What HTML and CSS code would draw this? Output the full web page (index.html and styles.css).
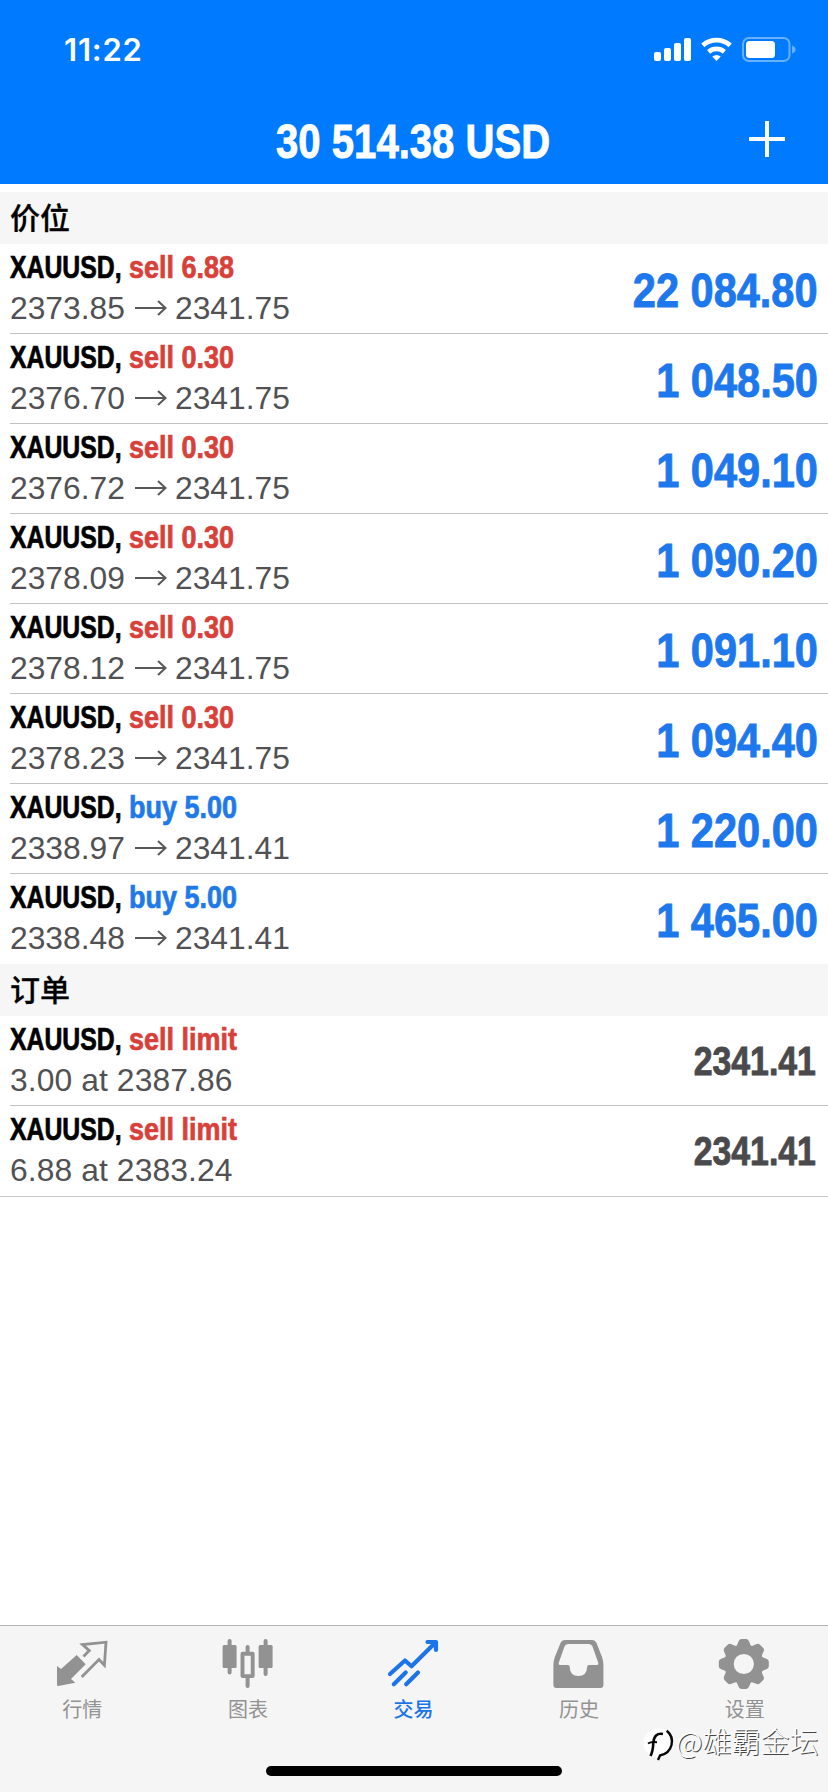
FILE: index.html
```html
<!DOCTYPE html>
<html lang="zh-CN">
<head>
<meta charset="utf-8">
<title>交易</title>
<link rel="stylesheet" href="styles.css">
</head>
<body>
<div class="app">
  <header class="header">
    <div class="status">
      <span class="time">11:22</span>
      <svg class="status-icons" width="144" height="28" viewBox="0 0 144 28" fill="#fff">
        <rect x="1" y="16" width="7" height="9" rx="2"/><rect x="11" y="12" width="7" height="13" rx="2"/><rect x="21" y="7" width="7" height="18" rx="2"/><rect x="31" y="2" width="7" height="23" rx="2"/>
        <g fill="none" stroke="#fff" stroke-width="4.8"><path d="M49.800 9.400a20.500 20.500 0 0 1 27.400 0"/><path d="M55.600 15.800a12.400 12.400 0 0 1 15.800 0"/></g>
        <path d="M63.500 25l-4.300-4.400q4.300-3.200 8.600 0z"/>
        <rect x="90" y="2" width="46.500" height="23" rx="6" fill="none" stroke="#66b0ff" stroke-width="2"/>
        <rect x="93" y="5" width="29" height="17" rx="3.500"/><path d="M139 9.500q3.500 1 3.500 4t-3.500 4z" fill="#66b0ff"/>
      </svg>
    </div>
    <div class="nav">
      <h1 class="balance">30 514.38 USD</h1>
      <svg class="plus" width="36" height="36" viewBox="0 0 36 36"><path d="M18 0V36M0 18H36" stroke="#fff" stroke-width="4"/></svg>
    </div>
  </header>
  <main class="content">
    <h2 class="section">价位</h2>
    <ul class="list">
      <li class="row"><div><div class="name"><b class="symbol">XAUUSD,</b><b class="side sell">sell 6.88</b></div><div class="price">2373.85<svg class="arrow" viewBox="0 0 32 16"><path d="M0 8H30M23 1L30.500 8L23 15"/></svg>2341.75</div></div><strong class="profit">22 084.80</strong></li>
      <li class="row"><div><div class="name"><b class="symbol">XAUUSD,</b><b class="side sell">sell 0.30</b></div><div class="price">2376.70<svg class="arrow" viewBox="0 0 32 16"><path d="M0 8H30M23 1L30.500 8L23 15"/></svg>2341.75</div></div><strong class="profit">1 048.50</strong></li>
      <li class="row"><div><div class="name"><b class="symbol">XAUUSD,</b><b class="side sell">sell 0.30</b></div><div class="price">2376.72<svg class="arrow" viewBox="0 0 32 16"><path d="M0 8H30M23 1L30.500 8L23 15"/></svg>2341.75</div></div><strong class="profit">1 049.10</strong></li>
      <li class="row"><div><div class="name"><b class="symbol">XAUUSD,</b><b class="side sell">sell 0.30</b></div><div class="price">2378.09<svg class="arrow" viewBox="0 0 32 16"><path d="M0 8H30M23 1L30.500 8L23 15"/></svg>2341.75</div></div><strong class="profit">1 090.20</strong></li>
      <li class="row"><div><div class="name"><b class="symbol">XAUUSD,</b><b class="side sell">sell 0.30</b></div><div class="price">2378.12<svg class="arrow" viewBox="0 0 32 16"><path d="M0 8H30M23 1L30.500 8L23 15"/></svg>2341.75</div></div><strong class="profit">1 091.10</strong></li>
      <li class="row"><div><div class="name"><b class="symbol">XAUUSD,</b><b class="side sell">sell 0.30</b></div><div class="price">2378.23<svg class="arrow" viewBox="0 0 32 16"><path d="M0 8H30M23 1L30.500 8L23 15"/></svg>2341.75</div></div><strong class="profit">1 094.40</strong></li>
      <li class="row"><div><div class="name"><b class="symbol">XAUUSD,</b><b class="side buy">buy 5.00</b></div><div class="price">2338.97<svg class="arrow" viewBox="0 0 32 16"><path d="M0 8H30M23 1L30.500 8L23 15"/></svg>2341.41</div></div><strong class="profit">1 220.00</strong></li>
      <li class="row"><div><div class="name"><b class="symbol">XAUUSD,</b><b class="side buy">buy 5.00</b></div><div class="price">2338.48<svg class="arrow" viewBox="0 0 32 16"><path d="M0 8H30M23 1L30.500 8L23 15"/></svg>2341.41</div></div><strong class="profit">1 465.00</strong></li>
    </ul>
    <h2 class="section">订单</h2>
    <ul class="list orders">
      <li class="row"><div><div class="name"><b class="symbol">XAUUSD,</b><b class="side sell">sell limit</b></div><div class="price">3.00 at 2387.86</div></div><strong class="quote">2341.41</strong></li>
      <li class="row"><div><div class="name"><b class="symbol">XAUUSD,</b><b class="side sell">sell limit</b></div><div class="price">6.88 at 2383.24</div></div><strong class="quote">2341.41</strong></li>
    </ul>
  </main>
  <footer class="footer">
    <nav class="tabs">
      <a class="tab"><svg viewBox="0 0 52 52"><path d="M0 28L4 31L19.700 17L28.700 26.300L14 41L18.300 44.700L1.300 48Q0 48 0 47Z" fill="currentColor"/><path d="M26.500 18.500L32.300 12.600L25.500 6.600L49 4.200L47.400 27.300L42 21.600L24.700 39" fill="none" stroke="currentColor" stroke-width="2.800"/></svg><span>行情</span></a>
      <a class="tab"><svg viewBox="0 0 52 52" fill="currentColor"><rect x=".600" y="7" width="14" height="23" rx="1.500"/><rect x="36.600" y="7" width="14" height="23" rx="1.500"/><path d="M7.600 3V34.500M43.600 3V36M25.600 9V15M25.600 39V48" stroke="currentColor" stroke-width="4" stroke-linecap="round"/><rect x="20.500" y="15.700" width="10.200" height="22.400" fill="none" stroke="currentColor" stroke-width="3.900" stroke-linejoin="round"/></svg><span>图表</span></a>
      <a class="tab active"><svg viewBox="0 0 52 52" fill="none" stroke="currentColor" stroke-width="4.200" stroke-linecap="round" stroke-linejoin="round"><path d="M2 36L17 22.500L23.500 28.300L47 5M39.500 4H48V12M5.800 46.200L17.700 34.500M18.200 46.200L30 34.500"/><path d="M42 4L48 10V4Z" fill="currentColor" stroke-width="2"/></svg><span>交易</span></a>
      <a class="tab"><svg viewBox="0 0 52 52"><path fill="currentColor" fill-rule="evenodd" d="M11 2H38Q41 2 42.500 5L48 19Q49.400 23 49.400 27V47Q49.400 50 46.400 50H2.400Q-.600 50-.600 47V27Q-.600 23 .800 19L6.500 5Q8 2 11 2ZM14 6Q11.500 6 10.500 8.500L5 24Q4 27 6 27H14Q15.700 27 15.700 29Q16 38 24.400 38Q32.800 38 33.100 29Q33.100 27 35 27H43Q45 27 44 24L38.500 8.500Q37.500 6 35 6Z"/></svg><span>历史</span></a>
      <a class="tab"><svg viewBox="0 0 52 52"><g transform="translate(24.800 26)" fill="currentColor"><circle r="14.700" fill="none" stroke="currentColor" stroke-width="9.200"/><path id="tooth" d="M-8.300-17Q-6.300-19-5.500-22Q-4.600-25-2.500-25H2.500Q4.600-25 5.500-22Q6.300-19 8.300-17Z"/><use href="#tooth" transform="rotate(45)"/><use href="#tooth" transform="rotate(90)"/><use href="#tooth" transform="rotate(135)"/><use href="#tooth" transform="rotate(180)"/><use href="#tooth" transform="rotate(225)"/><use href="#tooth" transform="rotate(270)"/><use href="#tooth" transform="rotate(315)"/></g></svg><span>设置</span></a>
    </nav>
    <div class="home-bar"></div>
    <div class="watermark">
      <svg width="36" height="36" viewBox="0 0 36 36"><circle cx="17" cy="20" r="14.500" fill="#fff"/><g fill="none" stroke="#080808"><path d="M9.500 33Q12 28 12.300 20Q13 9.500 22 11" stroke-width="2.600"/><path d="M7 20.500Q10 18.500 16 19.200" stroke-width="2"/><path d="M25.700 7.700Q32.500 13 30.500 22Q28.500 30.500 19 32.500L17 37" stroke-width="2.400"/></g></svg>
      <span>@雄霸金坛</span>
    </div>
  </footer>
</div>
</body>
</html>
```

FILE: styles.css
```css
* { box-sizing: border-box; }
body { margin: 0; background: #fff; font-family: "Liberation Sans", "Noto Sans CJK SC", sans-serif; }
h1, h2, ul { margin: 0; padding: 0; list-style: none; }
svg { display: block; overflow: visible; }

.app { display: flex; flex-direction: column; width: 828px; height: 1792px; overflow: hidden; }

.header { flex: none; height: 184px; background: #007aff; color: #fff; }
.status { display: flex; justify-content: space-between; align-items: center; height: 100px; padding: 0 31px 0 64px; }
.time { font: 600 31px/36px Inter, sans-serif; letter-spacing: .8px; }
.nav { display: grid; grid-template-columns: 1fr auto 1fr; align-items: center; height: 78px; padding-right: 43px; padding-left: 41px; }
.balance { grid-column: 2; margin-top: 5px; font-size: 48px; line-height: 56px; white-space: nowrap; transform: scaleX(.835); -webkit-text-stroke: .9px currentColor; }
.plus { justify-self: end; }

.content { flex: 1; padding-top: 8px; }
.section { height: 52px; padding-left: 10px; background: #f6f6f6; font: 500 30px/49px "Noto Sans CJK SC", sans-serif; color: #000; -webkit-text-stroke: .3px currentColor; }
.row { display: flex; justify-content: space-between; height: 90px; margin-left: 10px; padding-right: 10px; border-bottom: 1px solid #c2c2c5; }
.list .row:last-child { border-bottom-color: transparent; }
.orders { border-bottom: 1px solid #c8c8cc; }
.name { display: flex; height: 41px; padding-top: 6px; font-size: 31px; line-height: 36px; white-space: nowrap; -webkit-text-stroke: .7px currentColor; }
.symbol { width: 119px; color: #000; transform: scaleX(.8); transform-origin: left; }
.side { transform: scaleX(.87); transform-origin: left; }
.sell { color: #d8413a; }
.buy { color: #2079e8; }
.price { display: flex; align-items: center; height: 42px; margin-top: 2px; color: #515154; font-size: 31.800px; line-height: 42px; white-space: pre; }
.orders .price { letter-spacing: .1px; }
.arrow { width: 32px; height: 16px; margin: 0 8px 0 10px; fill: none; stroke: #58585a; stroke-width: 2; }
.profit, .quote { line-height: 94px; white-space: nowrap; transform-origin: right; -webkit-text-stroke: .9px currentColor; }
.profit { color: #1c78ec; font-size: 48px; transform: scaleX(.865); }
.quote { padding-right: 2px; color: #4a4a4d; font-size: 40px; line-height: 90px; transform: scaleX(.845); }

.footer { position: relative; flex: none; display: flex; flex-direction: column; align-items: center; height: 167px; background: #f5f5f5; border-top: 1px solid #b4b4b4; }
.tabs { display: grid; grid-template-columns: repeat(5, 1fr); width: 100%; height: 140px; padding-top: 12px; }
.tab { display: flex; flex-direction: column; align-items: center; color: #929292; font: 400 20px/20px "Noto Sans CJK SC", sans-serif; }
.tab svg { width: 52px; height: 52px; }
.tab span { margin: 9px 1px 0 0; }
.tab.active { color: #1c75e8; font-weight: 500; }
.home-bar { width: 296px; height: 10px; border-radius: 5px; background: #000; }
.watermark { position: absolute; top: 97px; left: 641px; display: flex; align-items: center; color: #fdfdfd; font: 300 29px/30px "Noto Sans CJK SC", sans-serif; white-space: nowrap; text-shadow: 1px 1px 0 #444; }
.watermark svg { margin-right: -1px; }
.watermark span { margin-top: -3px; }
```
